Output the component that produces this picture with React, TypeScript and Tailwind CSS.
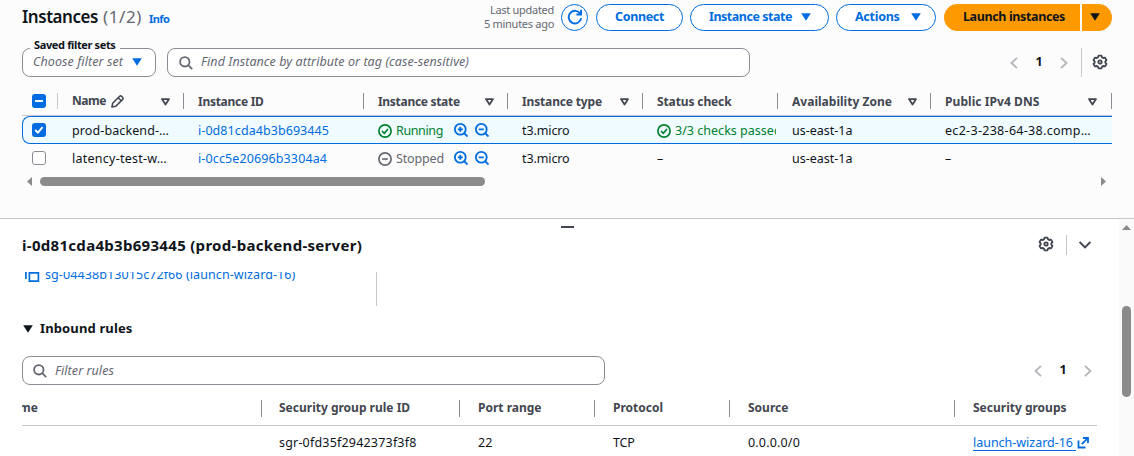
import type { ReactNode } from 'react';

const COLS = 'grid grid-cols-[36px_126px_180px_144px_135px_135px_153px_181px]';
const RULE_COLS = 'grid grid-cols-[240px_198px_135px_135px_225px_142px]';

function Gear() {
  return (
    <svg width="16" height="16" viewBox="0 0 16 16" fill="none" stroke="#424650" strokeWidth="1.8" strokeLinejoin="round">
      <path d="M6.500 1.700h3l.6 1.700 1.100.6 1.900-.4 1.400 2.500-1.200 1.300v1.200l1.200 1.300-1.400 2.500-1.900-.4-1.100.6-.6 1.700h-3l-.6-1.700-1.100-.6-1.900.4-1.400-2.500 1.200-1.300V7.400L1.500 6.100l1.400-2.500 1.900.4 1.100-.6z" />
      <circle cx="8" cy="8" r="1.700" />
    </svg>
  );
}

function Search() {
  return (
    <svg width="14" height="14" viewBox="0 0 14 14" fill="none" stroke="#656871" strokeWidth="1.8">
      <circle cx="5.800" cy="5.800" r="4.700" />
      <path d="M9.200 9.200l4 4" />
    </svg>
  );
}

function Zoom({ plus = false }: { plus?: boolean }) {
  return (
    <svg width="14" height="14" viewBox="0 0 14 14" fill="none" stroke="#006ce0" strokeWidth="1.8">
      <circle cx="6.300" cy="6.300" r="5.400" />
      <path d="M10 10l3.500 3.500M3.800 6.300h5" />
      {plus && <path d="M6.300 3.800v5" />}
    </svg>
  );
}

function Status({ ok = false }: { ok?: boolean }) {
  return (
    <svg className="mt-px shrink-0" width="14" height="14" viewBox="0 0 14 14" fill="none" stroke={ok ? '#00802f' : '#656871'} strokeWidth="1.7">
      <circle cx="7" cy="7" r="6.100" />
      {ok ? <path d="M4 7l2.300 2.300L10 5" /> : <path d="M4.200 7h5.600" />}
    </svg>
  );
}

function Caret({ className }: { className: string }) {
  return (
    <svg className={className} width="10" height="8" viewBox="0 0 10 8" fill="currentColor">
      <path d="M0.200 0.300h9.600L5 7.800z" />
    </svg>
  );
}

function SortCaret({ className }: { className: string }) {
  return (
    <svg className={className} width="9" height="8" viewBox="0 0 9 8" fill="none" stroke="#424650" strokeWidth="1.800" strokeLinejoin="round">
      <path d="M1 1.100h7L4.500 6.500z" />
    </svg>
  );
}

function Chevron({ right = false }: { right?: boolean }) {
  return (
    <svg width="8" height="12" viewBox="0 0 8 12" fill="none" stroke="#b4b4bb" strokeWidth="1.800">
      {right ? <path d="M1 0.800L6.500 6 1 11.200" /> : <path d="M7 0.800L1.500 6 7 11.200" />}
    </svg>
  );
}

function Pager() {
  return (
    <div className="flex items-center">
      <Chevron />
      <span className="w-[42px] text-center text-[12.5px] font-bold text-[#0f141a]">1</span>
      <Chevron right />
    </div>
  );
}

function Box({ mark }: { mark?: 'check' | 'dash' }) {
  if (!mark) return <span className="block size-[14px] rounded-[3px] border border-[#8c8c94] bg-white" />;
  return (
    <span className="grid size-[14px] place-items-center rounded-[3px] bg-[#006ce0]">
      <svg width="14" height="14" viewBox="0 0 14 14" fill="none" stroke="#fff" strokeWidth="1.900">
        {mark === 'check' ? <path d="M3.200 7l2.700 2.700L10.600 4.200" /> : <path d="M3 7h8" />}
      </svg>
    </span>
  );
}

function Head({ children, className = '', sort }: { children?: ReactNode; className?: string; sort?: string }) {
  return (
    <div className="flex h-4 items-center border-r border-[#8c8c94] pl-[14px] text-[12px] font-bold text-[#424650]">
      <span className={`mt-[2px] ${className}`}>{children}</span>
      {sort && <SortCaret className={sort} />}
    </div>
  );
}

function Cell({ children, className = '' }: { children: ReactNode; className?: string }) {
  return <div className={`flex items-center overflow-hidden whitespace-nowrap pl-[14px] ${className}`}>{children}</div>;
}

function RuleHead({ children, className = '', last = false }: { children: ReactNode; className?: string; last?: boolean }) {
  return (
    <div className={`flex h-[17px] items-center overflow-hidden whitespace-nowrap text-[12px] font-bold text-[#424650] ${last ? '' : 'border-r border-[#8c8c94]'}`}>
      <span className={`-mt-[2px] ${className}`}>{children}</span>
    </div>
  );
}

const outline = 'flex h-[27px] items-center rounded-full border-[1.5px] border-[#006ce0] bg-white text-[12.5px] font-bold text-[#006ce0]';

export default function App() {
  return (
    <div className="flex h-[456px] w-[1134px] flex-col overflow-hidden whitespace-nowrap bg-white font-['Noto_Sans','Open_Sans',sans-serif] text-[12.5px] text-[#0f141a]">
      <section className="h-[219px] shrink-0 border-b border-[#c6c6cd] bg-[#fcfcfd] pl-[22px]">
        <header className="flex h-[38px] w-[1090px] items-start pt-1">
          <h1 className="flex items-baseline text-[17px] leading-[26px]">
            <span className="font-semibold tracking-[-0.46px]">Instances</span>
            <span className="ml-[5px] tracking-[0.6px] text-[#656871]">(1/2)</span>
            <span className="ml-[7px] text-[11px] font-bold tracking-[-0.5px] text-[#006ce0]">Info</span>
          </h1>
          <div className="ml-auto flex items-center">
            <div className="-mt-[2px] mr-[7px] text-right text-[11px] leading-[14px] tracking-[-0.29px] text-[#656871]">
              <div>Last updated</div>
              <div>5 minutes ago</div>
            </div>
            <div className="grid size-[27px] place-items-center rounded-full border-[1.5px] border-[#006ce0] bg-white">
              <svg className="-mt-px" width="16" height="16" viewBox="0 0 16 16" fill="none" stroke="#006ce0" strokeWidth="1.900">
                <path d="M14.200 9.200A6.300 6.300 0 1 1 13.400 4.900" />
                <path d="M14.100 0.800v4.700H9.400" />
              </svg>
            </div>
            <div className={`${outline} ml-2 w-[87px] justify-center tracking-[-0.35px]`}>Connect</div>
            <div className={`${outline} ml-[7px] w-[139px] pl-[18px] tracking-[-0.47px]`}>
              Instance state<Caret className="-mt-[2px] ml-[9px]" />
            </div>
            <div className={`${outline} ml-[7px] w-[100px] pl-[18px] tracking-[-0.28px]`}>
              Actions<Caret className="-mt-[2px] ml-[11px]" />
            </div>
            <div className="ml-2 flex h-[27px] w-[136px] items-center rounded-l-full bg-[#ff9900] pl-[19px] text-[12.5px] font-bold tracking-[-0.37px]">Launch instances</div>
            <div className="ml-[2px] flex h-[27px] w-[30px] items-center rounded-r-full bg-[#ff9900] pl-[8px]">
              <Caret className="-mt-[2px]" />
            </div>
          </div>
        </header>

        <div className="flex h-[49px] w-[1090px] items-start pt-[10px]">
          <div className="relative flex h-[29px] w-[134px] items-center rounded-[8px] border border-[#8c8c94] bg-white pl-[10px]">
            <span className="absolute -top-[12px] left-[7px] bg-[#fcfcfd] px-1 text-[11px] font-bold leading-[16px] tracking-[-0.36px]">Saved filter sets</span>
            <span className="-mt-px italic tracking-[0.1px] text-[#656871]">Choose filter set</span>
            <Caret className="-mt-px ml-[9px] text-[#006ce0]" />
          </div>
          <div className="ml-[11px] flex h-[29px] w-[583px] items-center rounded-[8px] border border-[#8c8c94] bg-white pl-[11px]">
            <Search />
            <span className="ml-2 -mt-px italic tracking-[0.07px] text-[#656871]">Find Instance by attribute or tag (case-sensitive)</span>
          </div>
          <div className="ml-auto flex h-[29px] items-center pr-1">
            <Pager />
            <div className="ml-[13px] mr-[10px] h-[29px] w-px bg-[#c6c6cd]" />
            <div className="-mt-[2px]"><Gear /></div>
          </div>
        </div>

        <div className="w-[1090px] overflow-hidden">
          <div className={`${COLS} h-[29px] items-center border-b border-[#c6c6cd]`}>
            <div className="flex h-4 items-center border-r border-[#c6c6cd] pl-[10px]">
              <Box mark="dash" />
            </div>
            <div className="flex h-4 items-center border-r border-[#8c8c94] pl-[14px] text-[12px] font-bold text-[#424650]">
              <span className="tracking-[-0.45px]">Name</span>
              <svg className="ml-[5px] mt-px" width="13" height="13" viewBox="0 0 13 13" fill="none" stroke="#424650" strokeWidth="1.600" strokeLinejoin="round">
                <path d="M1 12l.700-3.800L8.600 1.300a1.300 1.300 0 0 1 1.900 0l1.200 1.200a1.300 1.300 0 0 1 0 1.900L4.800 11.300zM7.200 2.800l3 3" />
              </svg>
              <SortCaret className="ml-auto mr-[13px] mt-[2px]" />
            </div>
            <Head className="tracking-[-0.28px]">Instance ID</Head>
            <Head className="tracking-[-0.3px]" sort="ml-auto mr-[13px] mt-[2px]">Instance state</Head>
            <Head className="tracking-[-0.15px]" sort="ml-auto mr-[13px] mt-[2px]">Instance type</Head>
            <Head className="tracking-[-0.12px]">Status check</Head>
            <Head className="tracking-[0.02px]" sort="ml-auto mr-[13px] mt-[2px]">Availability Zone</Head>
            <Head className="tracking-[0.07px]" sort="ml-auto mr-[14px] mt-[2px]">Public IPv4 DNS</Head>
          </div>

          <div className="h-[28px] rounded-l-[8px] border border-r-0 border-[#006ce0] bg-[#f0fbff]">
            <div className={`${COLS} -ml-px h-[26px]`}>
              <div className="flex items-center pl-[10px]"><Box mark="check" /></div>
              <Cell className="pt-[2px] tracking-[0.1px]">prod-backend-…</Cell>
              <Cell className="pt-[2px] tracking-[0.07px] text-[#006ce0]">i-0d81cda4b3b693445</Cell>
              <Cell>
                <Status ok />
                <span className="ml-1 mt-[2px] w-[58px] tracking-[-0.37px] text-[#00802f]">Running</span>
                <Zoom plus />
                <span className="ml-[7px]"><Zoom /></span>
              </Cell>
              <Cell className="pt-[2px] tracking-[-0.11px]">t3.micro</Cell>
              <Cell className="mr-[2px] text-[#00802f]">
                <Status ok />
                <span className="ml-1 mt-[2px] tracking-[0.02px]">3/3 checks passed</span>
              </Cell>
              <Cell className="pt-[2px]">us-east-1a</Cell>
              <Cell className="pt-[2px] tracking-[0.3px]">ec2-3-238-64-38.comp…</Cell>
            </div>
          </div>

          <div className={`${COLS} h-[28px]`}>
            <div className="flex items-center pl-[10px]"><Box /></div>
            <Cell className="pt-[2px] tracking-[0.25px]">latency-test-w…</Cell>
            <Cell className="pt-[2px] tracking-[0.12px] text-[#006ce0]">i-0cc5e20696b3304a4</Cell>
            <Cell>
              <Status />
              <span className="ml-1 mt-[2px] w-[58px] tracking-[-0.15px] text-[#656871]">Stopped</span>
              <Zoom plus />
              <span className="ml-[7px]"><Zoom /></span>
            </Cell>
            <Cell className="pt-[2px] tracking-[-0.11px]">t3.micro</Cell>
            <Cell className="pt-[2px]">–</Cell>
            <Cell className="pt-[2px]">us-east-1a</Cell>
            <Cell className="pt-[2px]">–</Cell>
          </div>
        </div>

        <div className="mt-[5px] flex h-[9px] w-[1090px] items-center pl-[5px] pr-[6px] text-[#8b8b8b]">
          <svg width="5" height="9" viewBox="0 0 5 9" fill="currentColor"><path d="M5 0v9L0 4.500z" /></svg>
          <div className="ml-2 h-[9px] w-[445px] rounded-full bg-[#8b8b8b]" />
          <svg className="ml-auto" width="5" height="9" viewBox="0 0 5 9" fill="currentColor"><path d="M0 0v9l5-4.500z" /></svg>
        </div>
      </section>

      <section className="flex min-h-0 flex-1">
        <div className="flex w-[1119px] flex-col pl-[22px]">
          <div className="ml-[539px] mt-[7px] h-[2px] w-[13px] shrink-0 bg-[#424650]" />
          <div className="flex h-[44px] shrink-0 items-start">
            <h2 className="mt-[6px] text-[15px] font-bold leading-[22px] tracking-[0.3px]">i-0d81cda4b3b693445 (prod-backend-server)</h2>
            <div className="ml-auto mr-[28px] mt-[7px] flex h-5 items-center">
              <div className="-mt-[2px]"><Gear /></div>
              <div className="ml-3 mr-[12px] h-5 w-px bg-[#c6c6cd]" />
              <svg className="-mt-px" width="12" height="8" viewBox="0 0 12 8" fill="none" stroke="#424650" strokeWidth="2"><path d="M0.600 1L6 6.400 11.400 1" /></svg>
            </div>
          </div>

          <div className="flex h-[34px] w-[355px] shrink-0 items-start overflow-hidden border-r border-[#c6c6cd] text-[#006ce0]">
            <svg className="-mt-[6px] ml-[2px] shrink-0" width="16" height="16" viewBox="0 0 16 16" fill="none" stroke="currentColor" strokeWidth="1.700">
              <path d="M5.400 6.900h9v8.200h-9zM1.900 12.900V2.500h10" />
            </svg>
            <span className="-mt-[6px] ml-[5px] leading-[18px] tracking-[0.09px]">sg-04438b13015c72f66 (launch-wizard-16)</span>
          </div>

          <h3 className="mt-[12px] flex h-[22px] shrink-0 items-center text-[13px] font-bold tracking-[0.13px]">
            <Caret className="-mt-px ml-[1px] mr-[7px]" />
            Inbound rules
          </h3>

          <div className="mt-[16px] flex h-[29px] w-[1075px] shrink-0 items-center">
            <div className="flex h-[29px] w-[583px] items-center rounded-[8px] border border-[#8c8c94] bg-white pl-[10px]">
              <Search />
              <span className="ml-2 mt-px italic tracking-[0.07px] text-[#656871]">Filter rules</span>
            </div>
            <div className="ml-auto mr-[5px]"><Pager /></div>
          </div>

          <div className={`${RULE_COLS} mt-[15px] h-[26px] w-[1075px] shrink-0 items-start border-b border-[#c6c6cd]`}>
            <RuleHead className="-ml-[3px]">me</RuleHead>
            <RuleHead className="pl-[17px]">Security group rule ID</RuleHead>
            <RuleHead className="pl-[18px]">Port range</RuleHead>
            <RuleHead className="pl-[18px]">Protocol</RuleHead>
            <RuleHead className="pl-[18px]">Source</RuleHead>
            <RuleHead className="pl-[18px]" last>Security groups</RuleHead>
          </div>
          <div className={`${RULE_COLS} h-[34px] w-[1075px] shrink-0 items-center`}>
            <div />
            <div className="pl-[17px] tracking-[0.19px]">sgr-0fd35f2942373f3f8</div>
            <div className="pl-[18px]">22</div>
            <div className="pl-[18px] tracking-[-0.22px]">TCP</div>
            <div className="pl-[18px] tracking-[0.17px]">0.0.0.0/0</div>
            <div className="flex items-center pl-[18px] text-[#006ce0]">
              <span className="whitespace-pre border-b border-[#006ce0] leading-[15px] tracking-[-0.02px]">launch-wizard-16 </span>
              <svg className="ml-px" width="12" height="12" viewBox="0 0 12 12" fill="none" stroke="currentColor" strokeWidth="1.800">
                <path d="M1.500 3.500v7h7M6 1h5v5M10.800 1.200L4.800 7.200" />
              </svg>
            </div>
          </div>
        </div>

        <div className="flex flex-1 flex-col items-center bg-[#fafafa] pt-[6px] text-[#8b8b8b]">
          <svg width="9" height="5" viewBox="0 0 9 5" fill="currentColor"><path d="M0 5h9L4.500 0z" /></svg>
          <div className="mt-[76px] h-[91px] w-[9px] rounded-full bg-[#8b8b8b]" />
        </div>
      </section>
    </div>
  );
}
